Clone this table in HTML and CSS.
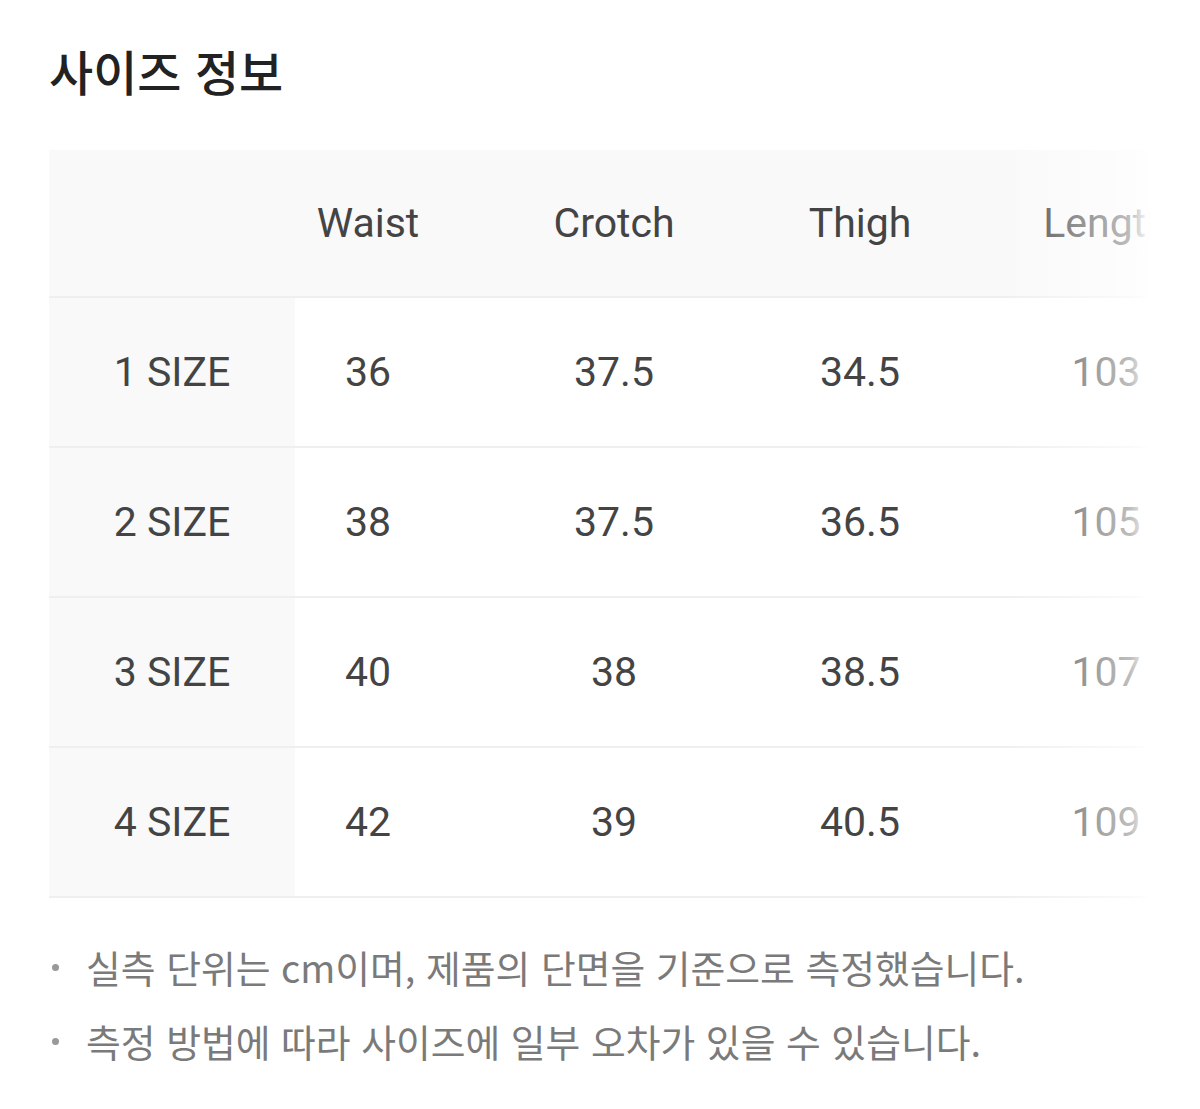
FILE: index.html
```html
<!DOCTYPE html>
<html lang="ko">
<head>
<meta charset="utf-8">
<title>사이즈 정보</title>
<link rel="stylesheet" href="styles.css">
</head>
<body>
<main class="page">
  <h1 class="title">사이즈 정보</h1>
  <div class="table-wrap">
    <div class="table">
      <div class="row head">
        <div class="cell label"></div>
        <div class="cell">Waist</div>
        <div class="cell">Crotch</div>
        <div class="cell">Thigh</div>
        <div class="cell">Length</div>
      </div>
      <div class="row">
        <div class="cell label">1 SIZE</div>
        <div class="cell">36</div>
        <div class="cell">37.5</div>
        <div class="cell">34.5</div>
        <div class="cell">103</div>
      </div>
      <div class="row">
        <div class="cell label">2 SIZE</div>
        <div class="cell">38</div>
        <div class="cell">37.5</div>
        <div class="cell">36.5</div>
        <div class="cell">105</div>
      </div>
      <div class="row">
        <div class="cell label">3 SIZE</div>
        <div class="cell">40</div>
        <div class="cell">38</div>
        <div class="cell">38.5</div>
        <div class="cell">107</div>
      </div>
      <div class="row">
        <div class="cell label">4 SIZE</div>
        <div class="cell">42</div>
        <div class="cell">39</div>
        <div class="cell">40.5</div>
        <div class="cell">109</div>
      </div>
    </div>
    <div class="fade"></div>
  </div>
  <ul class="notes">
    <li>실측 단위는 cm이며, 제품의 단면을 기준으로 측정했습니다.</li>
    <li>측정 방법에 따라 사이즈에 일부 오차가 있을 수 있습니다.</li>
  </ul>
</main>
</body>
</html>
```
FILE: styles.css
```css
html, body {
  margin: 0;
  padding: 0;
  background: #fff;
}
body {
  font-family: Roboto, "Noto Sans CJK KR", "Noto Sans", sans-serif;
  color: #444;
}
.page {
  padding: 39px 0 0 49px;
}
.title {
  margin: 0;
  font-family: "Noto Sans CJK KR", sans-serif;
  font-size: 48px;
  font-weight: 500;
  line-height: 62px;
  color: #222;
  height: 111px;
}
.table-wrap {
  position: relative;
  width: 1101px;
  overflow: hidden;
}
.table {
  display: flex;
  flex-direction: column;
  width: 1230px;
}
.row {
  display: grid;
  grid-template-columns: repeat(5, 246px);
  height: 148px;
  border-bottom: 2px solid #efefef;
}
.row.head {
  height: 146px;
  background: #f9f9f9;
}
.cell {
  display: flex;
  align-items: center;
  justify-content: center;
  padding-right: 100px;
  font-size: 41px;
  color: #444;
}
.cell.label {
  padding-right: 0;
  background: #f9f9f9;
}
.fade {
  position: absolute;
  top: 0;
  right: 0;
  width: 150px;
  height: 100%;
  background: linear-gradient(to right, rgba(255,255,255,0), rgba(255,255,255,0.4) 50%, rgba(255,255,255,0.65) 87%, #fff);
}
.notes {
  list-style: none;
  margin: 32px 0 0 0;
  padding: 0;
  font-family: "Noto Sans CJK KR", sans-serif;
  font-size: 37.8px;
  line-height: 74px;
  color: #7a7a7a;
}
.notes li {
  display: flex;
  align-items: center;
  gap: 27px;
}
.notes li::before {
  content: "";
  width: 7px;
  height: 7px;
  border-radius: 50%;
  background: #999;
  margin-left: 3px;
}
```
